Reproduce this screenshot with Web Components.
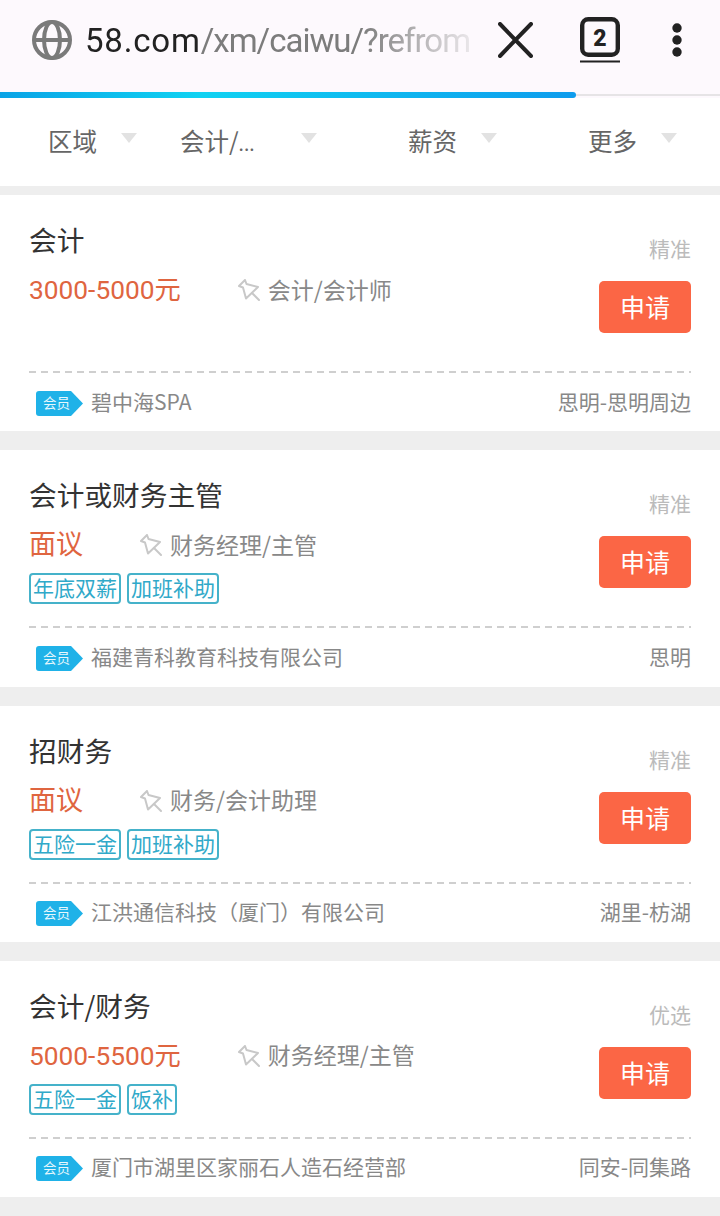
<!DOCTYPE html>
<html lang="zh">
<head>
<meta charset="utf-8">
<title>58.com</title>
<style>
  html, body { margin: 0; background: #eeeeee; }
  body { width: 720px; height: 1216px; overflow: hidden; font-family: "Noto Sans CJK SC", sans-serif; }
  job-list { display: block; }
  .dots { font-size: 19px; }
</style>
</head>
<body>
<browser-bar></browser-bar>
<filter-bar>
  <filter-item>区域</filter-item>
  <filter-item wide>会计/<span class="dots">...</span></filter-item>
  <filter-item>薪资</filter-item>
  <filter-item>更多</filter-item>
</filter-bar>
<job-list>
  <job-card title="会计" salary="3000-5000元" category="会计/会计师" rank="精准" company="碧中海SPA" place="思明-思明周边"></job-card>
  <job-card title="会计或财务主管" salary="面议" category="财务经理/主管" rank="精准" company="福建青科教育科技有限公司" place="思明">
    <job-tag>年底双薪</job-tag><job-tag>加班补助</job-tag>
  </job-card>
  <job-card title="招财务" salary="面议" category="财务/会计助理" rank="精准" company="江洪通信科技（厦门）有限公司" place="湖里-枋湖">
    <job-tag>五险一金</job-tag><job-tag>加班补助</job-tag>
  </job-card>
  <job-card title="会计/财务" salary="5000-5500元" category="财务经理/主管" rank="优选" company="厦门市湖里区家丽石人造石经营部" place="同安-同集路">
    <job-tag>五险一金</job-tag><job-tag>饭补</job-tag>
  </job-card>
</job-list>

<script>
const cjk = '"Noto Sans CJK SC", sans-serif';

class BrowserBar extends HTMLElement {
  connectedCallback() {
    this.attachShadow({ mode: 'open' }).innerHTML = `
    <style>
      :host { display: block; background: #fdf9fd; }
      .bar { height: 92px; display: flex; align-items: center; padding: 0 0 12px 32px; box-sizing: border-box; }
      .url { width: 385px; margin-left: 13px; font: 33px Roboto, sans-serif; letter-spacing: -1px; color: #7c7c7c; white-space: nowrap;
             -webkit-mask-image: linear-gradient(90deg, #000 72%, rgba(0,0,0,.15) 100%); mask-image: linear-gradient(90deg, #000 72%, rgba(0,0,0,.15) 100%); }
      .url b { font-weight: 400; letter-spacing: .8px; color: #222; }
      .close { margin-left: 28px; }
      .tabs { margin-left: 47px; }
      .more { margin-left: 51px; }
      svg { display: block; flex: none; }
      .track { height: 6px; position: relative; }
      .track::before { content: ""; display: block; position: absolute; left: 0; right: 0; top: 2px; height: 2px; background: #e6e4e6; }
      .fill { position: relative; width: 576px; height: 6px; border-radius: 0 3px 3px 0;
              background: linear-gradient(90deg, #0aa3e6 0, #10d2f2 200px, #0e9ced 100%); }
    </style>
    <div class="bar">
      <svg width="40" height="40" viewBox="0 0 40 40" fill="none" stroke="#7a7a7a" stroke-width="4">
        <circle cx="20" cy="20" r="18"/>
        <ellipse cx="20" cy="20" rx="8" ry="18"/>
        <path d="M2 20H38"/>
      </svg>
      <div class="url"><b>58.com</b>/xm/caiwu/?refrom</div>
      <svg class="close" width="35" height="36" viewBox="0 0 35 36" fill="none" stroke="#222" stroke-width="4" stroke-linecap="round"><path d="M2 2L33 34M33 2L2 34"/></svg>
      <svg class="tabs" width="40" height="46" viewBox="0 0 40 46" fill="none" stroke="#222">
        <rect x="2.2" y="2.2" width="35.6" height="35.6" rx="6" stroke-width="4.4"/>
        <path d="M0 44.5H40" stroke-width="2"/>
        <text x="20" y="28.5" text-anchor="middle" font-family="Roboto, sans-serif" font-weight="900" font-size="23" fill="#222" stroke="none">2</text>
      </svg>
      <svg class="more" width="12" height="34" viewBox="0 0 12 34" fill="#222"><circle cx="6" cy="5" r="4.7"/><circle cx="6" cy="17" r="4.7"/><circle cx="6" cy="29" r="4.7"/></svg>
    </div>
    <div class="track"><div class="fill"></div></div>`;
  }
}

class FilterBar extends HTMLElement {
  connectedCallback() {
    this.attachShadow({ mode: 'open' }).innerHTML = `
    <style>
      :host { display: grid; grid-template-columns: repeat(4, 180px); height: 88px; background: #fff; margin-bottom: 9px; }
    </style>
    <slot></slot>`;
  }
}

class FilterItem extends HTMLElement {
  connectedCallback() {
    this.attachShadow({ mode: 'open' }).innerHTML = `
    <style>
      :host { display: flex; align-items: center; font: 24.5px ${cjk}; color: #666; }
      .label { width: 121px; box-sizing: border-box; padding: 0 0 4px 48px; white-space: nowrap; }
      :host([wide]) .label { padding-left: 0; }
      i { width: 0; height: 0; margin-top: -9px; border-style: solid; border-width: 10px 8.5px 0; border-color: #e2e2e2 transparent transparent; }
    </style>
    <span class="label"><slot></slot></span><i></i>`;
  }
}

class JobTag extends HTMLElement {
  connectedCallback() {
    this.attachShadow({ mode: 'open' }).innerHTML = `
    <style>
      :host { display: block; box-sizing: border-box; height: 31px; padding: 0 2px; border: 2px solid #45b2ca; border-radius: 4px;
              font: 21px/25px ${cjk}; color: #30a9c9; white-space: nowrap; }
    </style>
    <slot></slot>`;
  }
}

class JobCard extends HTMLElement {
  connectedCallback() {
    const a = n => this.getAttribute(n);
    const numeric = /\d/.test(a('salary'));
    this.attachShadow({ mode: 'open' }).innerHTML = `
    <style>
      :host { display: block; height: 236.33px; margin-bottom: 19px; background: #fff; padding: 0 29px; box-sizing: border-box; font-family: ${cjk}; }
      .top { height: 176px; display: flex; justify-content: space-between; }
      .main { display: flex; flex-direction: column; }
      .title { height: 41px; margin-top: 24px; margin-bottom: 2px; font-size: 27.7px; line-height: 40px; color: #333; }
      .row { height: 56px; display: flex; align-items: center; }
      .salary { font: 27px/40px Roboto, ${cjk}; color: #df6540; margin-right: 57px; }
      .salary.num { font-size: 26.3px; }
      .cat { margin: 0 0 3px 8px; font-size: 23px; color: #888; }
      .tags { display: flex; gap: 6px; }
      .side { width: 92px; display: flex; flex-direction: column; align-items: flex-end; }
      .rank { margin-top: 38px; font-size: 21px; line-height: 30px; color: #bbb; }
      .apply { width: 92px; height: 52px; margin-top: 18px; border-radius: 5px; background: #fb6645; color: #fff; font-size: 25px; line-height: 50px; text-align: center; }
      .dash { height: 2px; background: repeating-linear-gradient(90deg, #cfcfcf 0 7px, transparent 7px 12px); }
      .foot { height: 58px; display: flex; align-items: center; font-size: 21px; color: #888; padding-left: 7px; }
      .badge { width: 47px; height: 25px; flex: none; margin-right: 8px; margin-top: 2px; }
      .company { flex: 1; white-space: nowrap; }
    </style>
    <div class="top">
      <div class="main">
        <div class="title">${a('title')}</div>
        <div class="row">
          <span class="salary${numeric ? ' num' : ''}">${a('salary')}</span>
          <svg width="22" height="22" viewBox="0 0 22 22" fill="none" stroke="#c8c8c8" stroke-width="2" stroke-linejoin="round" stroke-linecap="round">
            <path d="M7 1L1 7L5 8.5L8 19.5L20 8L8.5 5Z"/><path d="M14 14L21 21"/>
          </svg>
          <span class="cat">${a('category')}</span>
        </div>
        <div class="tags"><slot></slot></div>
      </div>
      <div class="side">
        <div class="rank">${a('rank')}</div>
        <div class="apply">申请</div>
      </div>
    </div>
    <div class="dash"></div>
    <div class="foot">
      <svg class="badge" viewBox="0 0 47 25"><path d="M3 0H35L47 12.5L35 25H3A3 3 0 0 1 0 22V3A3 3 0 0 1 3 0Z" fill="#1fb2e8"/><text x="7" y="16.5" font-size="13.5" fill="#e6f7fd" font-family="Noto Sans CJK SC, sans-serif">会员</text></svg>
      <span class="company" style="margin-bottom:3px">${a('company')}</span>
      <span style="margin-bottom:3px">${a('place')}</span>
    </div>`;
  }
}

customElements.define('browser-bar', BrowserBar);
customElements.define('filter-bar', FilterBar);
customElements.define('filter-item', FilterItem);
customElements.define('job-tag', JobTag);
customElements.define('job-card', JobCard);
</script>
</body>
</html>
